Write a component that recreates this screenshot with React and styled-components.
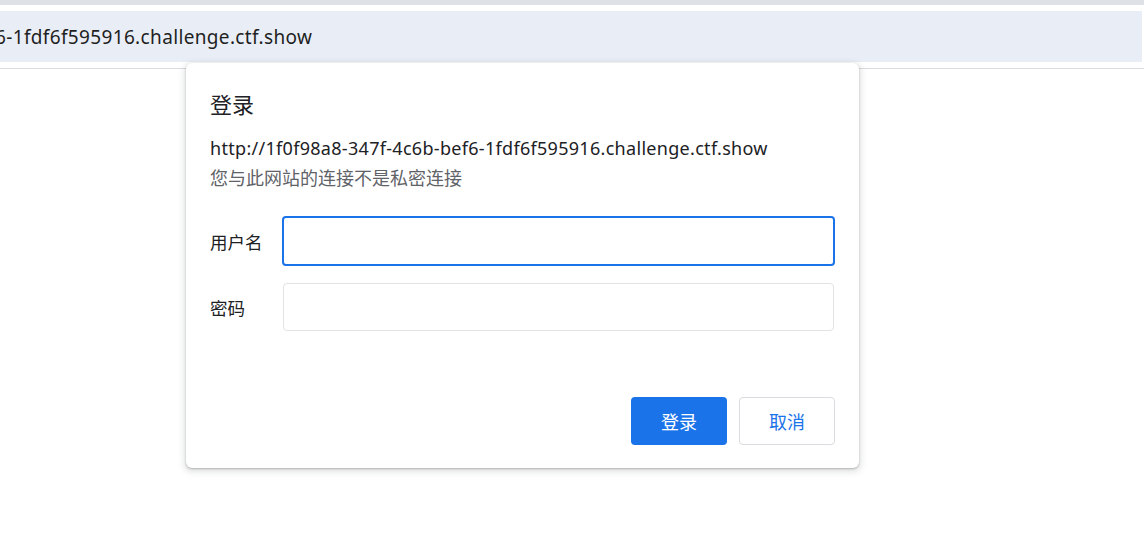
import React from "react";
import styled, { createGlobalStyle } from "styled-components";

const Global = createGlobalStyle`
  html, body { margin: 0; padding: 0; background: #fff; }
  body { font-family: "Noto Sans", "Noto Sans CJK SC", sans-serif; }
  * { box-sizing: border-box; }
`;

const Page = styled.div`
  width: 1144px;
  height: 535px;
  position: relative;
  overflow: hidden;
  background: #fff;
`;

const TabStrip = styled.div`
  height: 5px;
  background: #dee1e6;
`;

const Toolbar = styled.div`
  height: 64px;
  padding: 6px 2px 7px 0;
  border-bottom: 1px solid #dadce0;
  display: flex;
`;

const Omnibox = styled.div`
  flex: 1;
  height: 51px;
  background: #e9eef6;
  display: flex;
  align-items: center;
  overflow: hidden;
  font-size: 19px;
  letter-spacing: 0.35px;
  color: #1f1f1f;
  white-space: nowrap;
`;

const OmniText = styled.span`
  margin-left: -5px;
`;

const Dialog = styled.div`
  position: absolute;
  left: 186px;
  top: 63px;
  width: 673px;
  height: 405px;
  background: #fff;
  border-radius: 6px;
  box-shadow: 0 1px 2px rgba(60, 64, 67, 0.3), 0 2px 6px 2px rgba(60, 64, 67, 0.15);
  padding: 26px 24px 23px 24px;
  display: flex;
  flex-direction: column;
`;

const Title = styled.div`
  font-family: "Noto Sans CJK SC", sans-serif;
  font-size: 22px;
  color: #202124;
  line-height: 28px;
`;

const Origin = styled.div`
  margin-top: 19px;
  font-size: 18px;
  letter-spacing: 0.3px;
  color: #202124;
  line-height: 24px;
  white-space: nowrap;
`;

const Note = styled.div`
  margin-top: 5px;
  font-family: "Noto Sans CJK SC", sans-serif;
  font-size: 18px;
  color: #5f6368;
  line-height: 24px;
`;

const Form = styled.div`
  margin-top: 27px;
  display: grid;
  grid-template-columns: 72px 1fr;
  row-gap: 17px;
  align-items: center;
`;

const Label = styled.label`
  font-family: "Noto Sans CJK SC", sans-serif;
  font-size: 17.5px;
  color: #202124;
`;

const Input = styled.div`
  height: ${(p) => (p.$focused ? "50px" : "48px")};
  margin: ${(p) => (p.$focused ? "0" : "0 1px")};
  border-radius: 4px;
  border: ${(p) => (p.$focused ? "2px solid #1a73e8" : "1px solid #e3e3e3")};
`;

const Actions = styled.div`
  margin-top: auto;
  display: flex;
  justify-content: flex-end;
  gap: 12px;
`;

const Button = styled.button`
  width: 96px;
  height: 48px;
  border-radius: 4px;
  font-family: "Noto Sans CJK SC", sans-serif;
  font-size: 18px;
  cursor: pointer;
  background: ${(p) => (p.$primary ? "#1a73e8" : "#fff")};
  color: ${(p) => (p.$primary ? "#fff" : "#1a73e8")};
  border: ${(p) => (p.$primary ? "none" : "1px solid #dadce0")};
`;

export default function App() {
  return (
    <Page>
      <Global />
      <TabStrip />
      <Toolbar>
        <Omnibox>
          <OmniText>6-1fdf6f595916.challenge.ctf.show</OmniText>
        </Omnibox>
      </Toolbar>
      <Dialog>
        <Title>登录</Title>
        <Origin>http://1f0f98a8-347f-4c6b-bef6-1fdf6f595916.challenge.ctf.show</Origin>
        <Note>您与此网站的连接不是私密连接</Note>
        <Form>
          <Label>用户名</Label>
          <Input $focused />
          <Label>密码</Label>
          <Input />
        </Form>
        <Actions>
          <Button $primary>登录</Button>
          <Button>取消</Button>
        </Actions>
      </Dialog>
    </Page>
  );
}
